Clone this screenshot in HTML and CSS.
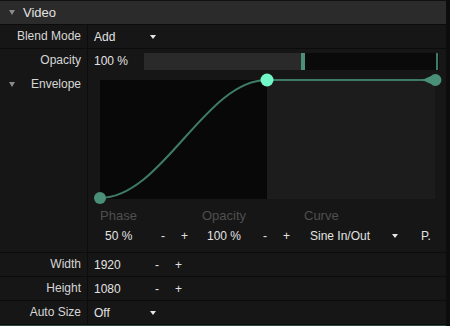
FILE: index.html
```html
<!DOCTYPE html>
<html lang="en">
<head>
    <meta charset="UTF-8">
    <title>Video</title>
    <link rel="stylesheet" href="styles.css">
</head>
<body>
    <div class="panel">
        <div class="section-head">
            <span class="arrow"></span>
            <span>Video</span>
        </div>

        <div class="row">
            <div class="label">Blend Mode</div>
            <div class="value">
                <span class="select-text">Add</span>
                <span class="caret"></span>
            </div>
        </div>

        <div class="row open">
            <div class="label">Opacity</div>
            <div class="value">
                <span class="num-text">100 %</span>
                <div class="slider">
                    <div class="slider-fill" style="width: 157px;"></div>
                    <div class="slider-handle"></div>
                    <div class="slider-rest"><span class="slider-end"></span></div>
                </div>
            </div>
        </div>

        <div class="row envelope">
            <div class="label label-toggle">
                <span class="arrow"></span>
                <span>Envelope</span>
            </div>
            <div class="value env-body">
                <svg class="graph" width="335" height="119" viewBox="0 0 335 119">
                    <rect x="0" y="0" width="167" height="119" fill="#080808"/>
                    <rect x="167" y="0" width="168" height="119" fill="#1c1c1c"/>
                    <path d="M0 118 C62 118 105 0 167 0 L335 0" fill="none" stroke="#3e7b67" stroke-width="2"/>
                    <circle cx="0" cy="118" r="6" fill="#4a8f78"/>
                    <path d="M322 0 L331 -4 A6 6 0 1 1 331 4 Z" fill="#4a8f78"/>
                    <circle cx="167" cy="0" r="6.5" fill="#72f7c9"/>
                </svg>
                <div class="env-fields">
                    <div class="field">
                        <div class="field-name">Phase</div>
                        <div class="field-line">
                            <span class="field-num">50 %</span>
                            <span class="step">-</span>
                            <span class="step">+</span>
                        </div>
                    </div>
                    <div class="field">
                        <div class="field-name">Opacity</div>
                        <div class="field-line">
                            <span class="field-num">100 %</span>
                            <span class="step">-</span>
                            <span class="step">+</span>
                        </div>
                    </div>
                    <div class="field">
                        <div class="field-name">Curve</div>
                        <div class="field-line">
                            <span class="curve-text">Sine In/Out</span>
                            <span class="caret"></span>
                            <span class="preset">P.</span>
                        </div>
                    </div>
                </div>
            </div>
        </div>

        <div class="row">
            <div class="label">Width</div>
            <div class="value">
                <span class="num-text wide">1920</span>
                <span class="step">-</span>
                <span class="step">+</span>
            </div>
        </div>

        <div class="row">
            <div class="label">Height</div>
            <div class="value">
                <span class="num-text wide">1080</span>
                <span class="step">-</span>
                <span class="step">+</span>
            </div>
        </div>

        <div class="row">
            <div class="label">Auto Size</div>
            <div class="value">
                <span class="select-text">Off</span>
                <span class="caret"></span>
            </div>
        </div>

        <div class="next-line"></div>
    </div>
</body>
</html>
```

FILE: styles.css
```css
body {
    margin: 0;
    width: 450px;
    height: 326px;
    overflow: hidden;
    background-color: #0d0d0d;
    font-family: "Liberation Sans", Arial, sans-serif;
    font-size: 12px;
    color: #e2e2e2;
}
.panel {
    width: 446px;
    background-color: #161616;
}
.section-head {
    height: 23px;
    display: flex;
    align-items: center;
    padding-left: 9px;
    background-color: #2b2b2b;
    border-top: 1px solid #111111;
    border-bottom: 1px solid #0c0c0c;
    font-size: 13px;
}
.arrow {
    width: 0;
    height: 0;
    border-left: 3.5px solid transparent;
    border-right: 3.5px solid transparent;
    border-top: 5px solid #8a8a8a;
    margin-right: 8px;
}
.row {
    display: flex;
    border-bottom: 1px solid #0c0c0c;
}
.row.open {
    border-bottom: none;
}
.row.open .label,
.row.open .value {
    height: 24px;
}
.label {
    width: 81px;
    height: 23px;
    padding-right: 6px;
    border-right: 1px solid #0c0c0c;
    line-height: 23px;
    text-align: right;
    color: #d6d6d6;
    flex-shrink: 0;
}
.label-toggle {
    display: flex;
    align-items: flex-start;
    justify-content: space-between;
    padding-left: 9px;
    width: 72px;
}
.label-toggle .arrow {
    margin-right: 0;
    margin-top: 9px;
}
.envelope .label {
    height: auto;
}
.value {
    flex: 1;
    height: 23px;
    display: flex;
    align-items: center;
    padding-left: 6px;
}
.select-text {
    width: 56px;
}
.caret {
    width: 0;
    height: 0;
    border-left: 3.5px solid transparent;
    border-right: 3.5px solid transparent;
    border-top: 4px solid #e6e6e6;
}
.num-text {
    width: 50px;
}
.num-text.wide {
    width: 61px;
}
.step {
    width: 20px;
}
.slider {
    width: 295px;
    height: 17px;
    display: flex;
}
.slider-fill {
    background-color: #2a2a2a;
}
.slider-handle {
    width: 4px;
    background-color: #4a8f78;
}
.slider-rest {
    flex: 1;
    display: flex;
    justify-content: flex-end;
    padding-right: 1px;
    background-color: #0a0a0a;
}
.slider-end {
    width: 2px;
    background-color: #3e7b67;
}
.env-body {
    height: auto;
    display: block;
    padding: 7px 0 8px 12px;
}
.graph {
    display: block;
    overflow: visible;
}
.env-fields {
    display: flex;
    margin-top: 9px;
}
.field {
    width: 102px;
}
.field:last-child {
    width: auto;
}
.field-name {
    height: 16px;
    line-height: 16px;
    font-size: 13px;
    color: #4f4f4f;
}
.field-line {
    display: flex;
    align-items: center;
    height: 16px;
    margin-top: 4px;
}
.field-num {
    width: 56px;
    padding-left: 5px;
}
.curve-text {
    width: 82px;
    padding-left: 6px;
}
.preset {
    margin-left: 23px;
}
.next-line {
    height: 1px;
    background-color: #2e4a41;
}
```
